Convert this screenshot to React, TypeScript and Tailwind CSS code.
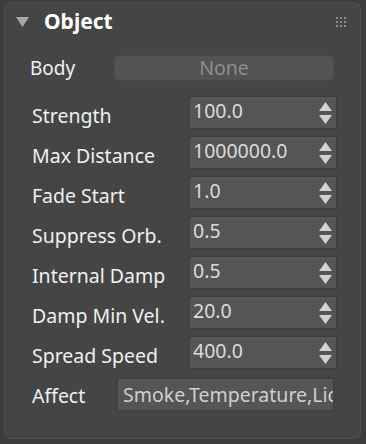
import React from 'react';

const rows = [
  { label: 'Strength', value: '100.0' },
  { label: 'Max Distance', value: '1000000.0' },
  { label: 'Fade Start', value: '1.0' },
  { label: 'Suppress Orb.', value: '0.5' },
  { label: 'Internal Damp', value: '0.5' },
  { label: 'Damp Min Vel.', value: '20.0' },
  { label: 'Spread Speed', value: '400.0' },
];

const Spinner = () => (
  <svg width="13" height="22" viewBox="0 0 13 22" className="shrink-0">
    <polygon points="6.5,0 13,9 0,9" fill="#d2d2d2" />
    <polygon points="0,13 13,13 6.5,22" fill="#d2d2d2" />
  </svg>
);

const Grip = () => (
  <div className="grid grid-cols-3 gap-[2px]">
    {Array.from({ length: 9 }).map((_, i) => (
      <div key={i} className="w-[2px] h-[2px] bg-[#8c8c8c]" />
    ))}
  </div>
);

export default function App() {
  return (
    <div
      className="w-[366px] h-[444px] bg-[#3c3c3c] pt-[2px] pl-[4px] pr-[5px] pb-[5px]"
      style={{ fontFamily: '"Noto Sans", "Open Sans", sans-serif' }}
    >
      <div className="h-full rounded-[6px] bg-[#454545] border border-[#4c4c4c] text-[#f0f0f0]">
        {/* Header */}
        <div className="flex items-center h-[38px] pl-[11px] pr-[14px]">
          <svg width="13" height="10" viewBox="0 0 13 10" className="mr-[15px]">
            <polygon points="0,0 13,0 6.5,10" fill="#a8a8a8" />
          </svg>
          <span className="text-[21px] font-bold text-white leading-none -mt-[1px]">Object</span>
          <div className="ml-auto">
            <Grip />
          </div>
        </div>

        {/* Body */}
        <div className="flex items-center mt-[14px] pl-[25px] pr-[26px]">
          <span className="w-[84px] text-[19px] leading-none">Body</span>
          <div className="flex-1 h-[26px] rounded-[5px] bg-[#525252] border border-[#4a4a4a] flex items-center justify-center text-[19.5px] leading-none text-[#8e8e8e]">
            None
          </div>
        </div>

        {/* Spinners */}
        <div className="flex flex-col gap-[7px] mt-[15px] pl-[27px] pr-[23px]">
          {rows.map((r) => (
            <div key={r.label} className="flex items-center h-[33px]">
              <span className="w-[157px] text-[19.5px] leading-none pt-[7px] whitespace-nowrap">{r.label}</span>
              <div className="flex-1 h-[33px] bg-[#555555] border border-[#3e3e3e] flex items-center pl-[3px] pr-[4px]">
                <span className="flex-1 text-[19.5px] leading-none text-[#dcdcdc] -mt-[3px]">{r.value}</span>
                <Spinner />
              </div>
            </div>
          ))}
          <div className="flex items-center h-[33px] mt-[2px]">
            <span className="w-[85px] text-[19.5px] leading-none pt-[2px]">Affect</span>
            <div className="flex-1 h-[33px] bg-[#555555] border border-[#3e3e3e] flex items-center pl-[5px] overflow-hidden mr-[3px]">
              <span className="text-[19.5px] leading-none text-[#cfcfcf] whitespace-nowrap">Smoke,Temperature,Liquid</span>
            </div>
          </div>
        </div>
      </div>
    </div>
  );
}
